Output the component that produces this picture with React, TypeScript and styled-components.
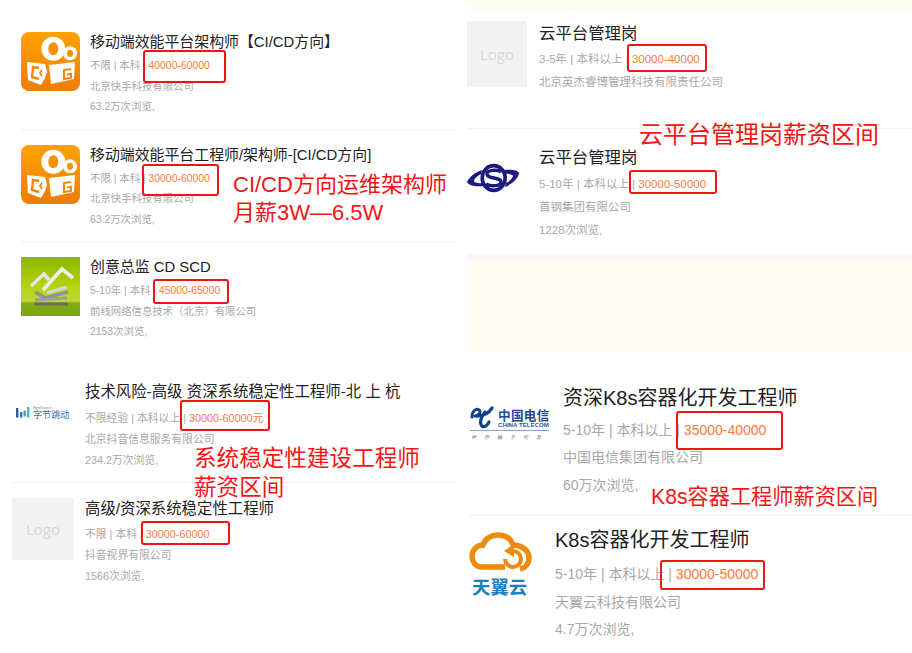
import React from "react";
import styled, { createGlobalStyle } from "styled-components";

const FONT = `"Liberation Sans", "Noto Sans CJK SC", sans-serif`;

const GlobalStyle = createGlobalStyle`
  html, body {
    margin: 0;
    padding: 0;
    background: #fff;
    font-family: ${FONT};
  }
`;

const Page = styled.div`
  position: relative;
  display: grid;
  grid-template-columns: 456px 456px;
  width: 912px;
  height: 653px;
  overflow: hidden;
  background: #fff;
`;

const Column = styled.div<{ $left?: number }>`
  display: flex;
  flex-direction: column;
  padding-left: ${(p) => p.$left ?? 0}px;
`;

const Panel = styled.section<{ $height?: number; $top?: number; $left?: number }>`
  display: flex;
  flex-direction: column;
  box-sizing: border-box;
  height: ${(p) => (p.$height ? `${p.$height}px` : "auto")};
  padding-top: ${(p) => p.$top ?? 0}px;
  padding-left: ${(p) => p.$left ?? 0}px;
`;

const CreamBand = styled.div<{ $height?: number }>`
  background: #fffcf2;
  height: ${(p) => (p.$height ? `${p.$height}px` : "auto")};
  flex: ${(p) => (p.$height ? "none" : "1")};
`;

const Strip = styled.div`
  height: 6px;
  background: #f8f8f8;
`;

const Row = styled.article<{ $top: number; $bottom: number }>`
  display: flex;
  align-items: flex-start;
  padding: ${(p) => p.$top}px 0 ${(p) => p.$bottom}px;
  border-bottom: 1px solid #f3f3f3;

  &:last-of-type {
    border-bottom: none;
  }
`;

const LogoSlot = styled.div<{ $w: number; $h: number; $gap: number }>`
  flex: none;
  display: flex;
  align-items: center;
  justify-content: center;
  width: ${(p) => p.$w}px;
  height: ${(p) => p.$h}px;
  margin-right: ${(p) => p.$gap}px;

  svg {
    display: block;
  }
`;

const Placeholder = styled.div`
  display: flex;
  align-items: center;
  justify-content: center;
  width: 100%;
  height: 100%;
  background: #f2f2f2;
  color: #d8d8d8;
  font-family: "Open Sans", sans-serif;
  font-size: 15px;
`;

const Body = styled.div`
  min-width: 0;
`;

const Title = styled.h3<{ $size: number; $line: number; $gap: number }>`
  margin: 0 0 ${(p) => p.$gap}px;
  font-size: ${(p) => p.$size}px;
  line-height: ${(p) => p.$line}px;
  font-weight: 400;
  color: #222;
  white-space: nowrap;
`;

const Line = styled.div<{ $size: number; $line: number }>`
  font-size: ${(p) => p.$size}px;
  line-height: ${(p) => p.$line}px;
  color: #a8a8a8;
  white-space: pre;
`;

const Salary = styled.span<{ $box: string }>`
  position: relative;
  display: inline-block;
  color: #ff7a3d;

  /* the red marker drawn over the salary */
  &::after {
    content: "";
    position: absolute;
    inset: ${(p) => p.$box};
    border: 2px solid #f01414;
    border-radius: 3px;
  }
`;

const Note = styled.div<{ $x: number; $y: number; $size: number; $line: number }>`
  position: absolute;
  left: ${(p) => p.$x}px;
  top: ${(p) => p.$y}px;
  font-size: ${(p) => p.$size}px;
  line-height: ${(p) => p.$line}px;
  color: #f51414;
  white-space: nowrap;
`;

type Scale = { title: number; titleLine: number; titleGap: number; text: number; line: number };

const SCALE_A: Scale = { title: 14.9, titleLine: 20, titleGap: 4, text: 10.4, line: 20.5 };
const SCALE_B: Scale = { title: 15.4, titleLine: 22, titleGap: 4.5, text: 10.8, line: 21 };
const SCALE_C: Scale = { title: 16.4, titleLine: 24, titleGap: 2.5, text: 11.5, line: 23 };
const SCALE_D: Scale = { title: 20, titleLine: 28, titleGap: 4.5, text: 14, line: 27.5 };

const KuaishouLogo = () => (
  <svg width="59" height="59" viewBox="0 0 59 59">
    <defs>
      <linearGradient id="ks" x1="0" y1="0" x2="0" y2="1">
        <stop offset="0" stopColor="#ffa200" />
        <stop offset="1" stopColor="#ee7d06" />
      </linearGradient>
    </defs>
    <rect width="59" height="59" rx="8" fill="url(#ks)" />
    <circle cx="32.3" cy="16.7" r="12" fill="#fff" />
    <ellipse cx="32.3" cy="16.7" rx="5" ry="6.5" fill="#f59200" />
    <circle cx="49" cy="21.3" r="7" fill="#fff" />
    <ellipse cx="49" cy="21.3" rx="3" ry="3.6" fill="#f59200" />
    <path d="M6 30 L24 32 L26 40 L24 46 L20 53 L7 48 Z" fill="#fff" />
    <path d="M28 33 L54 30 L53 47 L30 52 Z" fill="#fff" />
    <path d="M18 36 L12 35 L11 45 L18 47" fill="none" stroke="#f08a04" strokeWidth="2.4" />
    <path d="M21 38 L19 41 L21 44" fill="none" stroke="#f08a04" strokeWidth="1.8" />
    <path d="M50 37 L43 38 L43 47 L50 46 L50 42 L46 42.5" fill="none" stroke="#f08a04" strokeWidth="2" />
  </svg>
);

const GreenLogo = () => (
  <svg width="59" height="59" viewBox="0 0 59 59">
    <defs>
      <linearGradient id="gr" x1="0" y1="0" x2="0" y2="1">
        <stop offset="0" stopColor="#8db500" />
        <stop offset="0.5" stopColor="#b4d40c" />
        <stop offset="0.75" stopColor="#bcd83a" />
        <stop offset="0.78" stopColor="#84ac10" />
        <stop offset="1" stopColor="#7aa50a" />
      </linearGradient>
    </defs>
    <rect width="59" height="59" fill="url(#gr)" />
    <g fill="none" strokeLinejoin="miter">
      <path d="M10 29 L23 17 L28 23" stroke="#e4e6e0" strokeWidth="3.6" />
      <path d="M22 33 L41 12 L52 21" stroke="#eceee8" strokeWidth="3.8" />
      <path d="M14 35 L24 41 L47 35" stroke="#8f9590" strokeWidth="3.4" />
      <path d="M26 36 L46 30" stroke="#d4d6d0" strokeWidth="3" />
      <path d="M14 43 L46 41" stroke="#9a9f9a" strokeWidth="3" />
      <path d="M13 47 L47 47" stroke="#686e6a" strokeWidth="2.8" />
    </g>
  </svg>
);

const SteelLogo = () => (
  <svg width="60" height="66" viewBox="0 0 60 66">
    <g fill="#1a1a80">
      <path d="M0 37 C3 31 9 27 15 25 L14 29 C10 31 7 34 7 36.5 C9 38 12 38.5 15 38 L17 41 C9 42 2 41 0 37Z" />
      <path d="M52 28 C51 34 45 39 38 42 L39 38 C43 36 46 33 46 30.5 C44 29 41 28.5 38 28.5 L37 25 C44 24 51 25 52 28Z" />
    </g>
    <ellipse cx="26.7" cy="33" rx="11.5" ry="12.4" fill="none" stroke="#1a1a80" strokeWidth="3.6" />
    <path d="M34 27 C30 24 20 25 20 29 C20 34 34 32 34 37 C34 41 24 42 19 39" fill="none" stroke="#1a1a80" strokeWidth="3.4" />
  </svg>
);

const BytedanceLogo = () => (
  <svg width="62" height="62" viewBox="0 0 62 62">
    <rect x="4" y="27" width="2.4" height="9.5" fill="#2c5aa6" />
    <rect x="8" y="31" width="2.4" height="5.5" fill="#3579b8" />
    <rect x="11.5" y="29.5" width="2.4" height="6" fill="#46a2ad" />
    <rect x="15" y="26" width="2.4" height="10.5" fill="#4dbdb4" />
    <text x="21" y="28" fontSize="3.8" fill="#6c7f9c" fontFamily={FONT}>ByteDance</text>
    <text x="21" y="37" fontSize="9.1" fill="#3a6fa8" fontFamily={FONT}>字节跳动</text>
  </svg>
);

const TelecomLogo = () => (
  <svg width="81" height="78" viewBox="0 0 81 78">
    <g fill="none" stroke="#10418f" strokeLinecap="round">
      <path d="M3 33 C3 27 7 24 10 26 C13 28 9 32 6 32" strokeWidth="3" />
      <path d="M8 32 C14 32 20 29 23 24" strokeWidth="3.4" />
      <path d="M16 28 C12 33 10 39 13 42 C15 44 19 41 20 38" strokeWidth="3.2" />
    </g>
    <text x="29" y="36" fontSize="12.6" fontWeight="700" fill="#1e4a92" letterSpacing="0.3" fontFamily={FONT}>中国电信</text>
    <text x="29" y="43" fontSize="5" fontWeight="700" fill="#2c56a0" textLength="51" lengthAdjust="spacingAndGlyphs" fontFamily={FONT}>CHINA TELECOM</text>
    <rect x="1" y="46" width="79" height="1" fill="#8f9fd0" />
    <text x="2" y="55" fontSize="5" fontStyle="italic" fill="#6a7aa6" letterSpacing="8" fontFamily={FONT}>世界触手可及</text>
  </svg>
);

const CloudLogo = () => (
  <svg width="64" height="74" viewBox="0 0 64 74">
    <path
      d="M36 41 H13 C6 41 3 35 3 30 C3 24 8 19 14 19 C16 12 23 9 29 9 C37 9 42 13 44 19 C52 19 60 24 60 32 C60 38 56 42 51 43"
      fill="none"
      stroke="#ee8a0c"
      strokeWidth="5.4"
    />
    <path d="M44 25 A8 8 0 1 1 36 33" fill="none" stroke="#ee8a0c" strokeWidth="4" />
    <path d="M35 25 L45 18 L45 31 Z" fill="#ee8a0c" />
    <text x="3" y="68" fontSize="18.4" fontWeight="700" fill="#1a7fc1" fontFamily={FONT}>天翼云</text>
  </svg>
);

type JobRowProps = {
  scale: Scale;
  logo: React.ReactNode;
  logoW: number;
  logoH: number;
  gap: number;
  top: number;
  bottom: number;
  title: string;
  meta: string;
  salary: string;
  box: string;
  company: string;
  views?: string;
};

const JobRow = ({ scale, logo, logoW, logoH, gap, top, bottom, title, meta, salary, box, company, views }: JobRowProps) => (
  <Row $top={top} $bottom={bottom}>
    <LogoSlot $w={logoW} $h={logoH} $gap={gap}>
      {logo}
    </LogoSlot>
    <Body>
      <Title $size={scale.title} $line={scale.titleLine} $gap={scale.titleGap}>
        {title}
      </Title>
      <Line $size={scale.text} $line={scale.line}>
        {meta} | <Salary $box={box}>{salary}</Salary>
      </Line>
      <Line $size={scale.text} $line={scale.line}>
        {company}
      </Line>
      {views && (
        <Line $size={scale.text} $line={scale.line}>
          {views}
        </Line>
      )}
    </Body>
  </Row>
);

export default function App() {
  return (
    <>
      <GlobalStyle />
      <Page>
        <Column>
          <Panel $height={365} $left={21} $top={17}>
            <JobRow
              scale={SCALE_A}
              logo={<KuaishouLogo />}
              logoW={59}
              logoH={59}
              gap={10}
              top={15}
              bottom={11}
              title="移动端效能平台架构师【CI/CD方向】"
              meta="不限 | 本科"
              salary="40000-60000"
              box="-6px -16px -6px -6px"
              company="北京快手科技有限公司"
              views="63.2万次浏览,"
            />
            <JobRow
              scale={SCALE_A}
              logo={<KuaishouLogo />}
              logoW={59}
              logoH={59}
              gap={10}
              top={15}
              bottom={11}
              title="移动端效能平台工程师/架构师-[CI/CD方向]"
              meta="不限 | 本科"
              salary="30000-60000"
              box="-5px -9px -7px -7px"
              company="北京快手科技有限公司"
              views="63.2万次浏览,"
            />
            <JobRow
              scale={SCALE_A}
              logo={<GreenLogo />}
              logoW={59}
              logoH={59}
              gap={10}
              top={15}
              bottom={11}
              title="创意总监 CD SCD"
              meta="5-10年 | 本科"
              salary="45000-65000"
              box="-2px -9px -2px -6px"
              company="前线网络信息技术（北京）有限公司"
              views="2153次浏览,"
            />
          </Panel>
          <Panel $left={12}>
            <JobRow
              scale={SCALE_B}
              logo={<BytedanceLogo />}
              logoW={62}
              logoH={62}
              gap={11}
              top={16}
              bottom={11}
              title="技术风险-高级 资深系统稳定性工程师-北 上 杭"
              meta="不限经验 | 本科以上"
              salary="30000-60000元"
              box="-8px -7px -2px -9px"
              company="北京抖音信息服务有限公司"
              views="234.2万次浏览,"
            />
            <JobRow
              scale={SCALE_B}
              logo={<Placeholder>Logo</Placeholder>}
              logoW={62}
              logoH={62}
              gap={11}
              top={15}
              bottom={11}
              title="高级/资深系统稳定性工程师"
              meta="不限 | 本科"
              salary="30000-60000"
              box="-3px -21px 0 -5px"
              company="抖音视界有限公司"
              views="1566次浏览,"
            />
          </Panel>
        </Column>
        <Column $left={11}>
          <Panel $height={351}>
            <CreamBand $height={10} />
            <JobRow
              scale={SCALE_C}
              logo={<Placeholder>Logo</Placeholder>}
              logoW={60}
              logoH={66}
              gap={12}
              top={11}
              bottom={34}
              title="云平台管理岗"
              meta="3-5年 | 本科以上"
              salary="30000-40000"
              box="-4px -7px -1px -5px"
              company="北京英杰睿博管理科技有限责任公司"
            />
            <JobRow
              scale={{ ...SCALE_C, titleGap: 4.5 }}
              logo={<SteelLogo />}
              logoW={60}
              logoH={66}
              gap={12}
              top={16}
              bottom={12}
              title="云平台管理岗"
              meta="5-10年 | 本科以上"
              salary="30000-50000"
              box="-3px -11px 2px -9px"
              company="首钢集团有限公司"
              views="1228次浏览,"
            />
            <Strip />
            <CreamBand />
          </Panel>
          <Panel $top={33} $left={2}>
            <JobRow
              scale={SCALE_D}
              logo={<TelecomLogo />}
              logoW={81}
              logoH={78}
              gap={13}
              top={0}
              bottom={16}
              title="资深K8s容器化开发工程师"
              meta="5-10年 | 本科以上"
              salary="35000-40000"
              box="-6px -17px -6px -8px"
              company="中国电信集团有限公司"
              views="60万次浏览,"
            />
            <JobRow
              scale={{ ...SCALE_D, titleGap: 7 }}
              logo={<CloudLogo />}
              logoW={64}
              logoH={74}
              gap={22}
              top={10}
              bottom={0}
              title="K8s容器化开发工程师"
              meta="5-10年 | 本科以上"
              salary="30000-50000"
              box="-1px -7px -1px -16px"
              company="天翼云科技有限公司"
              views="4.7万次浏览,"
            />
          </Panel>
        </Column>
        <Note $x={233} $y={171} $size={22} $line={28}>
          CI/CD方向运维架构师
          <br />
          月薪3W—6.5W
        </Note>
        <Note $x={639} $y={120} $size={24} $line={30}>
          云平台管理岗薪资区间
        </Note>
        <Note $x={194} $y={444} $size={22.6} $line={29}>
          系统稳定性建设工程师
          <br />
          薪资区间
        </Note>
        <Note $x={651} $y={483} $size={21.2} $line={28}>
          K8s容器工程师薪资区间
        </Note>
      </Page>
    </>
  );
}
